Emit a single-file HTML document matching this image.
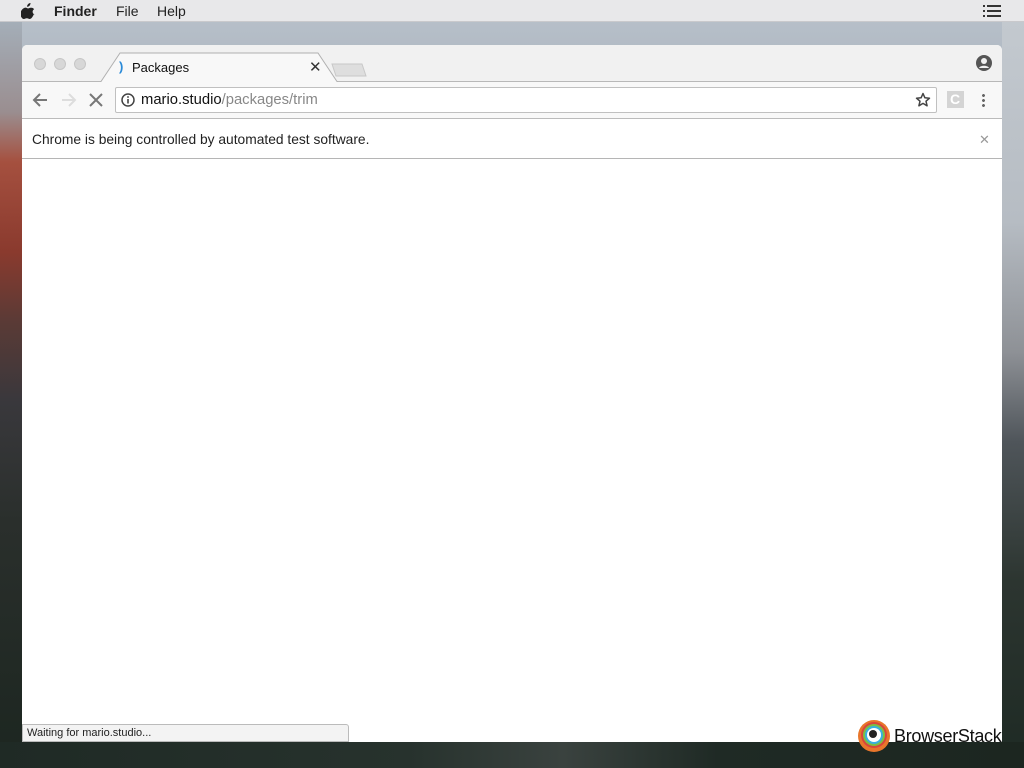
<!DOCTYPE html>
<html><head><meta charset="utf-8"><style>
*{margin:0;padding:0;box-sizing:border-box}
body{width:1024px;height:768px;overflow:hidden;position:relative;font-family:"Liberation Sans",sans-serif;
background:linear-gradient(180deg,#b9c2cc 0px,#a9b1ba 120px,#8e8f96 300px,#50555c 420px,#2c3530 560px,#1e2a24 768px);}
.left{position:absolute;left:0;top:22px;width:22px;height:746px;background:linear-gradient(180deg,#a4aeb8 0,#9a8e90 90px,#a5503f 140px,#8a3a2e 230px,#5a3a36 300px,#39383c 380px,#2a2f2c 500px,#1c2620 746px)}
.menubar{position:absolute;left:0;top:0;width:1024px;height:22px;background:#e8e8ea;border-bottom:1px solid #c9c9cc;font-size:14px;color:#222}
.menubar span{position:absolute;top:3px}
.win{position:absolute;left:22px;top:45px;width:980px;height:697px;background:#fff;border-radius:5px 5px 0 0;overflow:hidden}
.tabbar{position:absolute;left:0;top:0;width:980px;height:37px;background:#f1f1f1;border-bottom:1px solid #b8b8b8}
.dot{position:absolute;top:13px;width:12px;height:12px;border-radius:50%;background:#d7d7d7;border:1px solid #c6c6c6}
.toolbar{position:absolute;left:0;top:37px;width:980px;height:37px;background:#f8f8f8;border-bottom:1px solid #bbb}
.omni{position:absolute;left:93px;top:5px;width:822px;height:26px;background:#fff;border:1px solid #c0c0c0;border-radius:2px;font-size:15px}
.info{position:absolute;left:0;top:74px;width:980px;height:40px;border-bottom:1px solid #b5b5b5;font-size:13.8px;color:#222}
.status{position:absolute;left:0;top:679px;width:327px;height:18px;background:#f3f3f3;border:1px solid #bbb;border-radius:0 3px 0 0;font-size:11px;padding:2px 4px;color:#222}
</style></head><body>
<div class="left"></div>
<div style="position:absolute;left:1002px;top:22px;width:22px;height:746px;background:linear-gradient(180deg,#c3c9cf 0,#b6bcc3 200px,#8e9196 330px,#4f555a 420px,#2c3530 560px,#1e2a24 746px)"></div>
<div style="position:absolute;left:0;top:742px;width:1024px;height:26px;background:linear-gradient(90deg,#1f2a25,#27322d 40%,#3a423f 55%,#1f2a25 70%,#1c2620)"></div>
<div class="menubar">
<svg style="position:absolute;left:21px;top:3px" width="14" height="16" viewBox="0 0 14 16"><path d="M9.5 0c.1 1-.3 2-1 2.7-.7.7-1.6 1.1-2.4 1-.1-1 .4-2 1-2.6C7.8.4 8.8 0 9.5 0zM12.7 11.5c-.4.9-.6 1.3-1.1 2.1-.7 1.1-1.7 2.4-2.9 2.4-1.1 0-1.4-.7-2.9-.7s-1.8.7-2.9.7C1.7 16 .8 14.8.1 13.7-1.9 10.6.3 6.4 2.9 5.1c1.1-.6 2.2-.6 3.2 0 .6.3 1.2.4 1.7.2.7-.3 1.6-.7 2.8-.5 1 .1 1.9.6 2.5 1.4-2.2 1.3-1.9 4.5.6 5.300z" fill="#222"/></svg>
<span style="left:54px;font-weight:bold">Finder</span><span style="left:116px">File</span><span style="left:157px">Help</span>
<svg style="position:absolute;left:983px;top:5px" width="18" height="12"><g fill="#333"><rect x="0" y="0" width="2" height="2"/><rect x="4" y="0" width="14" height="2"/><rect x="0" y="5" width="2" height="2"/><rect x="4" y="5" width="14" height="2"/><rect x="0" y="10" width="2" height="2"/><rect x="4" y="10" width="14" height="2"/></g></svg>
</div>
<div class="win">
<div class="tabbar">
<div class="dot" style="left:12px"></div><div class="dot" style="left:32px"></div><div class="dot" style="left:52px"></div>
<svg style="position:absolute;left:78px;top:7px" width="300" height="31"><path d="M0 31 L20 1 L218 1 L238 31" fill="#f8f8f8" stroke="#b0b0b0"/><path d="M232 12 L262 12 L266 24 L236 24Z" fill="#dedede" stroke="#c8c8c8"/></svg>
<span style="position:absolute;left:97px;top:14px;color:#2a8ad8;font-weight:bold;font-size:13px">)</span>
<span style="position:absolute;left:110px;top:15px;font-size:13px;color:#111">Packages</span>
<span style="position:absolute;left:287px;top:13px;font-size:15px;color:#333">✕</span>
<svg style="position:absolute;left:954px;top:10px" width="16" height="16"><circle cx="8" cy="8" r="8" fill="#555"/><circle cx="8" cy="6" r="3" fill="#f1f1f1"/><path d="M3 13c1-3 9-3 10 0" fill="#f1f1f1"/></svg>
</div>
<div class="toolbar">
<svg style="position:absolute;left:10px;top:10px" width="16" height="16"><path d="M15 8H2M8 2L2 8l6 6" stroke="#777" stroke-width="2" fill="none"/></svg>
<svg style="position:absolute;left:39px;top:10px" width="16" height="16"><path d="M1 8h13M8 2l6 6-6 6" stroke="#ddd" stroke-width="2" fill="none"/></svg>
<svg style="position:absolute;left:67px;top:11px" width="14" height="14"><path d="M1 1l12 12M13 1L1 13" stroke="#777" stroke-width="2"/></svg>
<div class="omni">
<svg style="position:absolute;left:5px;top:5px" width="14" height="14"><circle cx="7" cy="7" r="6" stroke="#444" stroke-width="1.5" fill="none"/><rect x="6.2" y="6" width="1.6" height="4.5" fill="#444"/><rect x="6.2" y="3.2" width="1.6" height="1.6" fill="#444"/></svg>
<span style="position:absolute;left:25px;top:4px;color:#111;font-size:14.8px">mario.studio<span style="color:#888">/packages/trim</span></span>
<svg style="position:absolute;left:799px;top:4px" width="16" height="16" viewBox="0 0 16 16"><path d="M8 1.5l1.9 4.3 4.6.4-3.5 3 1.1 4.6L8 11.4 3.9 13.8 5 9.2 1.5 6.2l4.6-.4z" fill="none" stroke="#444" stroke-width="1.5" stroke-linejoin="round"/></svg>
</div>
<div style="position:absolute;left:925px;top:9px;width:17px;height:17px;background:#d4d4d4"><span style="position:absolute;left:3px;top:0px;color:#fff;font-weight:bold;font-size:14px">C</span></div>
<div style="position:absolute;left:960px;top:11px;width:3px;height:15px;background:radial-gradient(circle,#666 1.3px,transparent 1.6px) 0 0/3px 5px"></div>
</div>
<div class="info"><span style="position:absolute;left:10px;top:13px">Chrome is being controlled by automated test software.</span><span style="position:absolute;left:957px;top:13px;color:#999;font-size:13px">✕</span></div>
<div class="status">Waiting for mario.studio...</div>
</div>
<svg style="position:absolute;left:857px;top:719px" width="34" height="34"><circle cx="17" cy="17" r="16" fill="#e8762b"/><circle cx="17" cy="16" r="13" fill="#d9453b"/><circle cx="17" cy="16" r="11" fill="#7cbf44"/><circle cx="17" cy="16" r="9" fill="#3ab0df"/><circle cx="17" cy="16" r="7" fill="#fff"/><circle cx="16" cy="15" r="4" fill="#222"/></svg>
<span style="position:absolute;left:894px;top:726px;font-size:18px;color:#111;letter-spacing:-0.3px">BrowserStack</span>
</body></html>
